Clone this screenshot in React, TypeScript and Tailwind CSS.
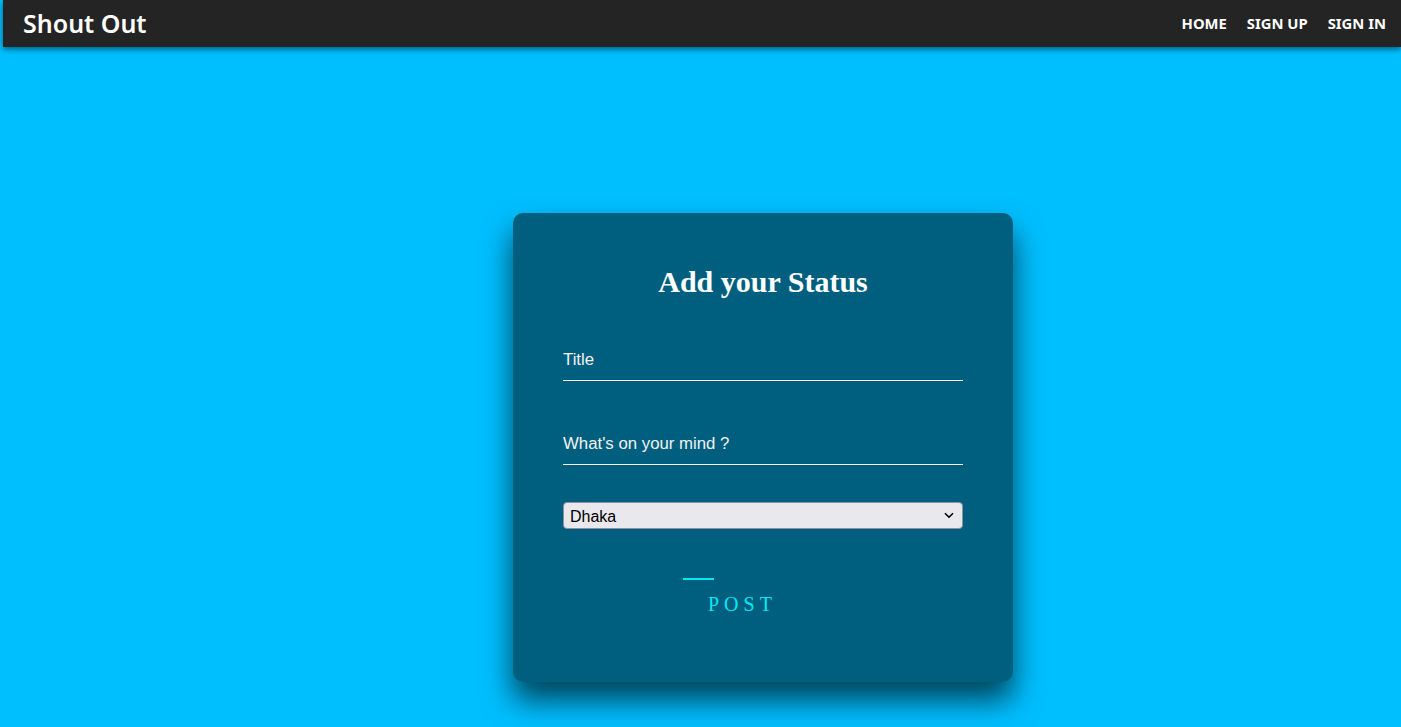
export default function App() {
  return (
    <div className="min-h-screen bg-[#00bfff] font-['Liberation_Sans',Arial,sans-serif]">
      <nav className="ml-[3px] flex h-[47px] items-center justify-between bg-[#242424] pl-[20px] pr-[15px] shadow-[0_2px_6px_rgba(0,0,0,0.55)]">
        <a className="font-['Noto_Sans',sans-serif] text-[25px] font-semibold leading-none text-white">
          Shout Out
        </a>
        <ul className="flex gap-[20px] font-['Noto_Sans',sans-serif] text-[14.8px] font-bold text-white">
          <li>HOME</li>
          <li>SIGN UP</li>
          <li>SIGN IN</li>
        </ul>
      </nav>

      <div className="flex justify-center">
        <div className="ml-[125px] mt-[166px] w-[500px] rounded-[10px] bg-black/50 px-[50px] pb-[66px] pt-[52px] shadow-[0_18px_30px_rgba(0,0,0,0.65)]">
          <h2 className="text-center font-['Liberation_Serif',serif] text-[30px] font-bold leading-[34px] text-white">
            Add your Status
          </h2>

          <form className="flex flex-col">
            <input
              autoFocus
              type="text"
              placeholder="Title"
              className="mt-[47px] block w-full border-b border-white bg-transparent pb-[10px] pt-[4px] text-[16.8px] leading-[20px] text-white caret-white outline-none placeholder:text-[#f2f2f2]"
            />
            <input
              type="text"
              placeholder="What's on your mind ?"
              className="mt-[49px] block w-full border-b border-white bg-transparent pb-[10px] pt-[4px] text-[16.8px] leading-[20px] text-white outline-none placeholder:text-[#f2f2f2]"
            />
            <div className="relative mt-[37px]">
              <select className="block h-[27px] w-full appearance-none rounded-[4px] border border-[#8f8f9d] bg-[#e9e8ed] pl-[6px] pt-[2px] text-[16px] leading-[20px] text-black outline-none">
                <option>Dhaka</option>
                <option>Chittagong</option>
                <option>Sylhet</option>
              </select>
              <svg
                className="pointer-events-none absolute right-[9px] top-[10px]"
                width="10"
                height="7"
                viewBox="0 0 10 7"
              >
                <path d="M1 1.2 L5 5.2 L9 1.2" fill="none" stroke="#000" strokeWidth="1.6" />
              </svg>
            </div>

            <div className="mt-[49px] flex flex-col items-start pl-[120px]">
              <span className="block h-[2px] w-[31px] bg-[#03e9f4]" />
              <a className="ml-[25px] mt-[12px] font-['Liberation_Serif',serif] text-[20px] leading-[24px] tracking-[5px] text-[#03e9f4]">
                POST
              </a>
            </div>
          </form>
        </div>
      </div>
    </div>
  );
}
